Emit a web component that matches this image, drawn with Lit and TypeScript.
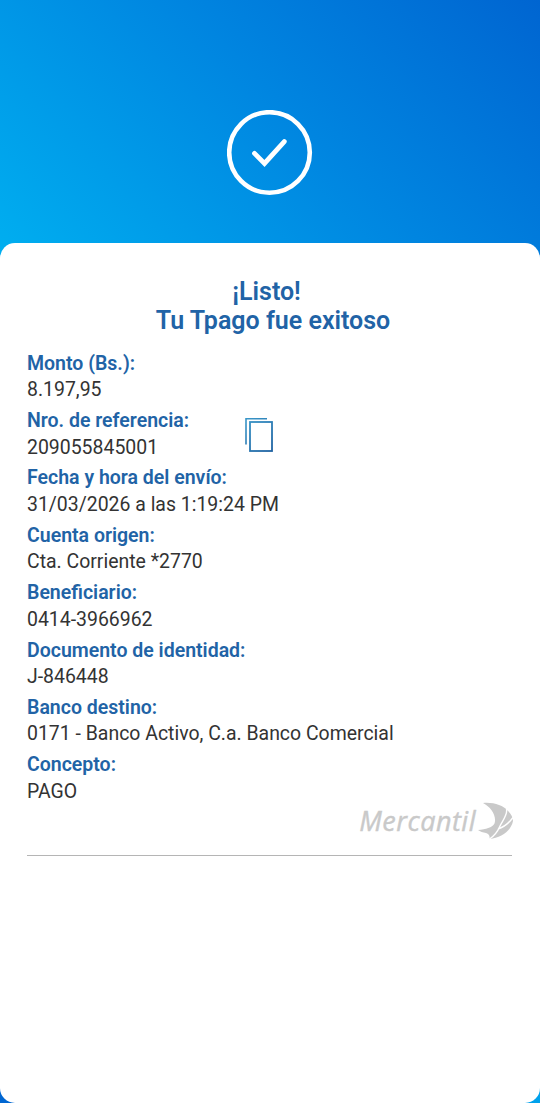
import { LitElement, css, html, svg } from 'lit';
import { customElement, property } from 'lit/decorators.js';

@customElement('receipt-row')
export class ReceiptRow extends LitElement {
  @property({ type: String })
  label = '';

  @property({ type: String })
  value = '';

  static styles = css`
    :host {
      display: flex;
      height: 57.4px;
      font-size: 19.5px;
      line-height: 26.4px;
    }

    .text {
      white-space: nowrap;
    }

    .label {
      color: #2163a6;
      font-weight: 600;
    }

    .value {
      color: #333;
      font-size: 19.45px;
    }
  `;

  render() {
    return html`
      <div class="text">
        <div class="label">${this.label}</div>
        <div class="value">${this.value}</div>
      </div>
      <slot></slot>
    `;
  }
}

const checkIcon = svg`
  <circle cx="42.5" cy="42.5" r="40.3" stroke-width="4.6" />
  <path d="M27.5 43.4 L37.5 53.4 L57.3 31.6" stroke-width="4.8" stroke-linecap="round" />
`;

@customElement('app-root')
export class AppRoot extends LitElement {
  rows = [
    { label: 'Monto (Bs.):', value: '8.197,95' },
    { label: 'Nro. de referencia:', value: '209055845001', copy: true },
    { label: 'Fecha y hora del envío:', value: '31/03/2026 a las 1:19:24 PM' },
    { label: 'Cuenta origen:', value: 'Cta. Corriente *2770' },
    { label: 'Beneficiario:', value: '0414-3966962' },
    { label: 'Documento de identidad:', value: 'J-846448' },
    { label: 'Banco destino:', value: '0171 - Banco Activo, C.a. Banco Comercial' },
    { label: 'Concepto:', value: 'PAGO' },
  ];

  static styles = css`
    :host {
      display: flex;
      flex-direction: column;
      box-sizing: border-box;
      height: 1103px;
      overflow: hidden;
      font-family: Roboto, 'Liberation Sans', sans-serif;
      background: linear-gradient(90deg, #0066d2, #00a2ec);
    }

    .hero {
      display: flex;
      justify-content: center;
      box-sizing: border-box;
      height: 260px;
      margin-bottom: -17px;
      padding-top: 110px;
      background: linear-gradient(45deg, #00aff0, #0085e0 55%, #0065d1);
    }

    .hero svg {
      width: 86px;
      height: 86px;
      fill: none;
      stroke: #fff;
    }

    .card {
      flex: 1;
      padding: 34px 28px 0 27px;
      border-radius: 15px;
      background: #fff;
    }

    h1 {
      margin: 0 0 14.9px;
      padding-right: 6px;
      color: #2163a6;
      font-size: 25px;
      font-weight: 600;
      line-height: 29.4px;
      text-align: center;
    }

    .line {
      display: block;
    }

    .line + .line {
      padding-left: 13px;
    }

    .copy {
      width: 30px;
      height: 35px;
      margin: 9px 0 0 55px;
      fill: none;
    }

    .brand {
      display: flex;
      justify-content: flex-end;
      align-items: center;
      height: 38px;
      margin-top: -8px;
      padding-bottom: 15px;
      border-bottom: 1px solid #b5b5b5;
      color: #c9c9c9;
    }

    .name {
      font-family: 'Open Sans', 'Noto Sans', sans-serif;
      font-size: 27px;
      font-style: italic;
      font-weight: 500;
      letter-spacing: 0.5px;
      line-height: 36px;
      -webkit-text-stroke: 0.4px currentColor;
    }

    .mark {
      width: 36px;
      height: 38px;
      margin: 0 -1px 0 1px;
    }
  `;

  renderCopyIcon() {
    return html`
      <svg class="copy" viewBox="0 0 30 35">
        <defs>
          <linearGradient id="edge" x1="0" y1="0" x2="30" y2="35" gradientUnits="userSpaceOnUse">
            <stop offset="0" stop-color="#3b9acb" />
            <stop offset="1" stop-color="#1d5f9f" />
          </linearGradient>
        </defs>
        <path d="M2 27.5V1.8H23" stroke="url(#edge)" stroke-width="1.6" />
        <rect x="6" y="5" width="22" height="29" stroke="url(#edge)" stroke-width="1.8" />
      </svg>
    `;
  }

  render() {
    return html`
      <div class="hero">
        <svg viewBox="0 0 86 86">${checkIcon}</svg>
      </div>
      <main class="card">
        <h1>
          <span class="line">¡Listo!</span>
          <span class="line">Tu Tpago fue exitoso</span>
        </h1>
        ${this.rows.map(
          (row) => html`
            <receipt-row .label=${row.label} .value=${row.value}>
              ${row.copy ? this.renderCopyIcon() : ''}
            </receipt-row>
          `
        )}
        <div class="brand">
          <span class="name">Mercantil</span>
          <svg class="mark" viewBox="0 0 36 38">
            <path
              fill="currentColor"
              d="M6 1C16 0 26 3 31 9C34 12 36 15 36 19C34 29 24 36 12.500 37C13 34 12 32 9 31C6 30.500 3 29.500 1 28C9 27.500 15 25.500 17.500 21.500C20 14 14 5 6 1Z"
            />
            <path
              d="M29.500 7C31 13 25 19 22.500 25C20.500 30 17 34 12 37.500M21 27C27 25 32 21 36 15.500"
              fill="none"
              stroke="#fff"
              stroke-width="1.4"
            />
          </svg>
        </div>
      </main>
    `;
  }
}
